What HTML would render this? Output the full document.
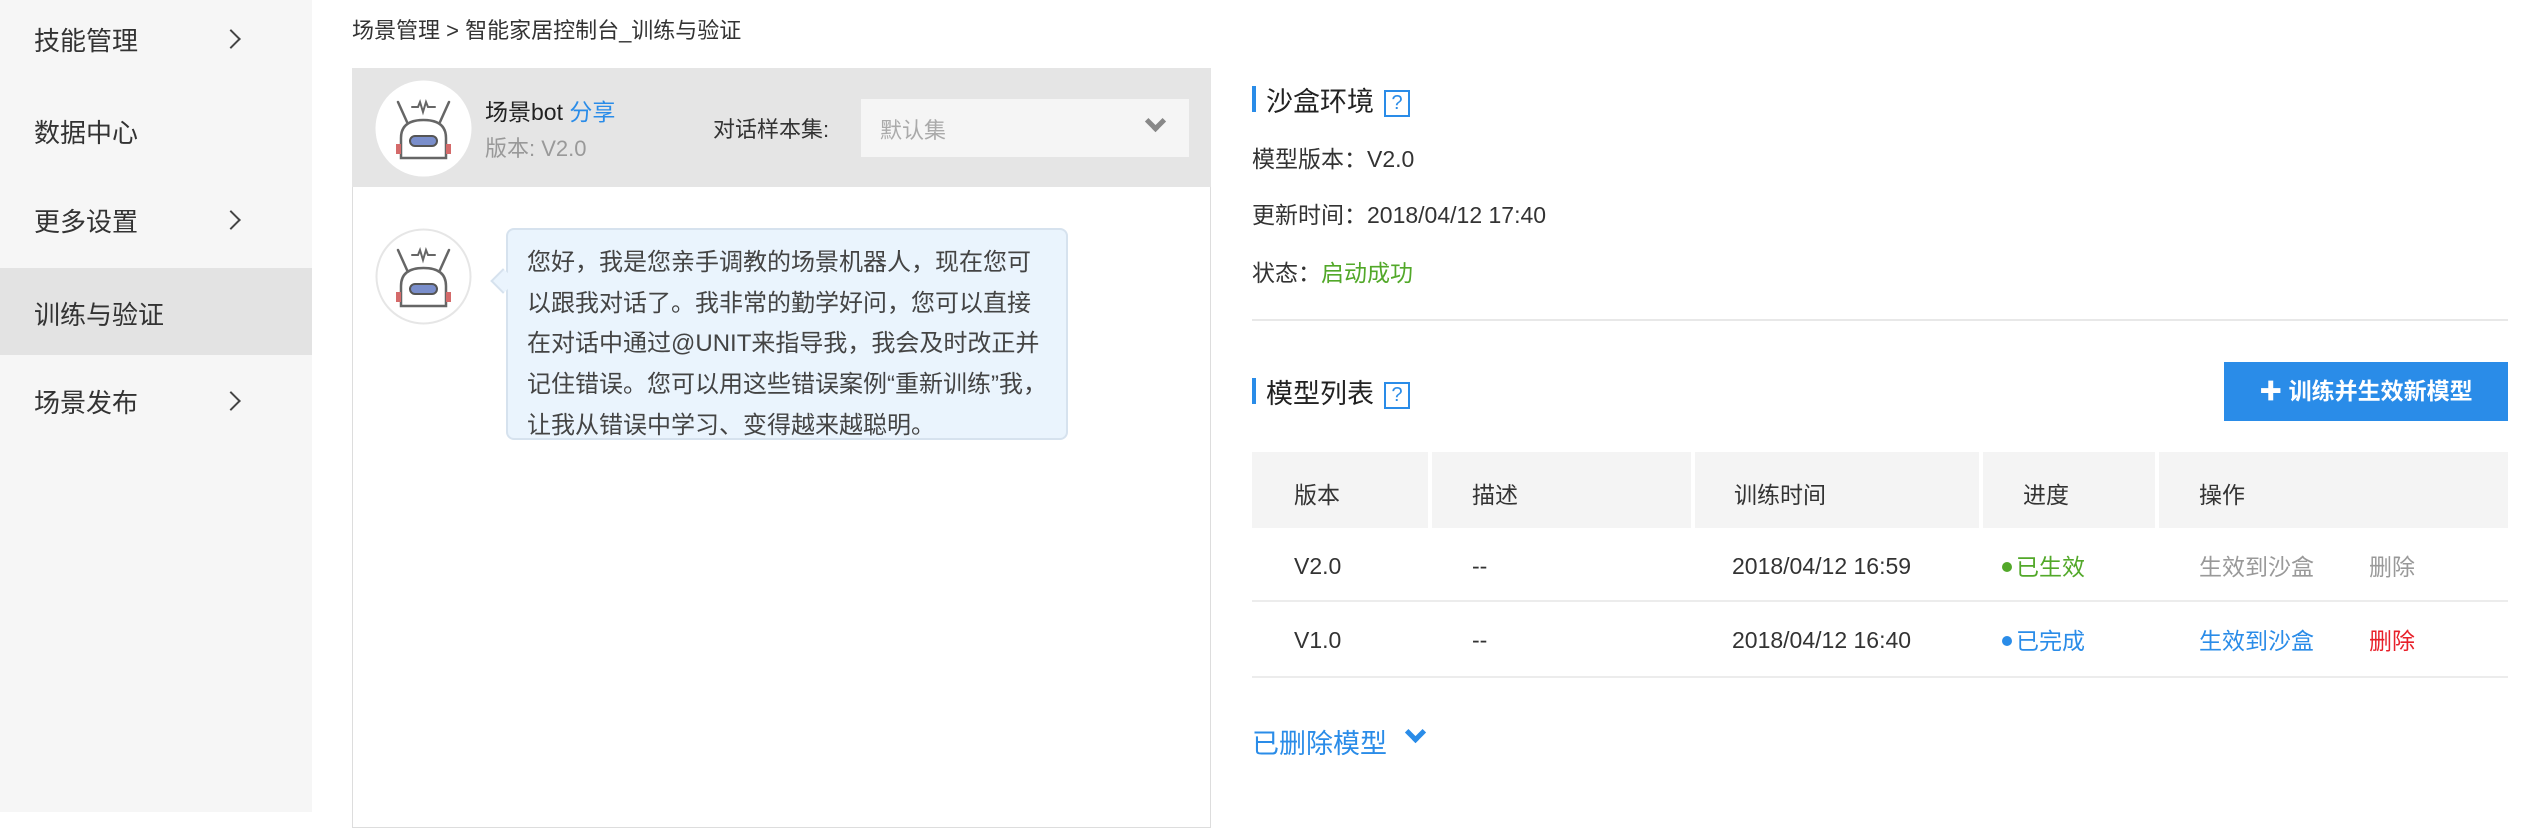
<!DOCTYPE html>
<html><head><meta charset="utf-8"><style>
*{margin:0;padding:0;box-sizing:border-box}
html,body{width:2534px;height:812px}
body{background:#fff;font-family:"Liberation Sans","Noto Sans CJK SC",sans-serif;color:#333;position:relative;overflow:hidden}
.a{position:absolute;white-space:nowrap}
.side{position:absolute;left:0;top:0;width:312px;height:812px;background:#f6f6f6}
.si{position:absolute;left:34px;font-size:26px;color:#333}
.chev{position:absolute;left:224px;width:14px;height:14px;border-right:2px solid #444;border-top:2px solid #444;transform:rotate(45deg)}
.t{font-size:23px;color:#333}
.q{display:inline-block;width:26px;height:27px;border:2px solid #2a8ce8;color:#2a8ce8;font-size:20px;line-height:23px;text-align:center;vertical-align:middle;margin-left:10px}
.bar{position:absolute;left:1252px;width:4px;height:26px;background:#2a8ce8}
.dot{display:inline-block;width:10px;height:10px;border-radius:50%;margin-right:4px;vertical-align:3px}
</style></head><body>
<div class="side">
<div style="position:absolute;left:0;top:268px;width:312px;height:87px;background:#e3e3e3"></div>
<div class="si" style="top:21px">技能管理</div><div class="chev" style="top:32px"></div>
<div class="si" style="top:113px">数据中心</div>
<div class="si" style="top:202px">更多设置</div><div class="chev" style="top:213px"></div>
<div class="si" style="top:295px">训练与验证</div>
<div class="si" style="top:383px">场景发布</div><div class="chev" style="top:394px"></div>
</div>
<div class="a" style="left:352px;top:13px;font-size:22px;color:#333">场景管理 &gt; 智能家居控制台_训练与验证</div>
<div style="position:absolute;left:352px;top:68px;width:859px;height:760px;border:1px solid #ddd"></div>
<div style="position:absolute;left:352px;top:68px;width:859px;height:119px;background:#e5e5e5"></div>
<svg style="position:absolute;left:375px;top:80px" width="97" height="97" viewBox="0 0 97 97">
<circle cx="48.5" cy="48.5" r="48" fill="#fff"/>
<g stroke="#666" stroke-width="2.5" fill="none" stroke-linecap="round">
<path d="M23 22 L32 42 M74 22 L65 42"/>
<path d="M37 27 L43 27 L45 22 L48 32 L51 22 L53 27 L60 27" stroke-width="2"/>
<path d="M26 78 L26 58 Q26 40 48.5 40 Q71 40 71 58 L71 78 Z" fill="#fff"/>
</g>
<rect x="35" y="56" width="27" height="10" rx="5" fill="#7a8ecb" stroke="#555" stroke-width="2"/>
<rect x="21" y="64" width="5" height="10" fill="#d46a6a"/><rect x="71" y="64" width="5" height="10" fill="#d46a6a"/>
</svg>
<div class="a" style="left:485px;top:93px;font-size:23px;color:#222">场景bot <span style="color:#2a8ce8">分享</span></div>
<div class="a" style="left:485px;top:131px;font-size:22px;color:#999">版本: V2.0</div>
<div class="a" style="left:713px;top:112px;font-size:22px;color:#333">对话样本集:</div>
<div style="position:absolute;left:861px;top:99px;width:328px;height:58px;background:#f5f5f5"></div>
<div class="a" style="left:880px;top:113px;font-size:22px;color:#aaa">默认集</div>
<div style="position:absolute;left:1148px;top:114px;width:15px;height:15px;border-right:5px solid #888;border-bottom:5px solid #888;transform:rotate(45deg)"></div>
<svg style="position:absolute;left:375px;top:228px" width="97" height="97" viewBox="0 0 97 97">
<circle cx="48.5" cy="48.5" r="47" fill="#fff" stroke="#e6e6e6" stroke-width="2"/>
<g stroke="#666" stroke-width="2.5" fill="none" stroke-linecap="round">
<path d="M23 22 L32 42 M74 22 L65 42"/>
<path d="M37 27 L43 27 L45 22 L48 32 L51 22 L53 27 L60 27" stroke-width="2"/>
<path d="M26 78 L26 58 Q26 40 48.5 40 Q71 40 71 58 L71 78 Z" fill="#fff"/>
</g>
<rect x="35" y="56" width="27" height="10" rx="5" fill="#7a8ecb" stroke="#555" stroke-width="2"/>
<rect x="21" y="64" width="5" height="10" fill="#d46a6a"/><rect x="71" y="64" width="5" height="10" fill="#d46a6a"/>
</svg>
<div style="position:absolute;left:506px;top:228px;width:562px;height:212px;background:#eaf4fd;border:2px solid #d6e2ee;border-radius:8px"></div>
<div style="position:absolute;left:494px;top:272px;width:18px;height:18px;background:#eaf4fd;border-left:2px solid #d6e2ee;border-bottom:2px solid #d6e2ee;transform:rotate(45deg)"></div>
<div style="position:absolute;left:527px;top:243px;font-size:24px;line-height:40.7px;color:#444;white-space:nowrap">您好，我是您亲手调教的场景机器人，现在您可<br>以跟我对话了。我非常的勤学好问，您可以直接<br>在对话中通过@UNIT来指导我，我会及时改正并<br>记住错误。您可以用这些错误案例“重新训练”我，<br>让我从错误中学习、变得越来越聪明。</div>

<div class="bar" style="top:86px"></div>
<div class="a" style="left:1266px;top:80px;font-size:27px;color:#222">沙盒环境<span class="q">?</span></div>
<div class="a t" style="left:1252px;top:140px">模型版本：V2.0</div>
<div class="a t" style="left:1252px;top:196px">更新时间：2018/04/12 17:40</div>
<div class="a t" style="left:1252px;top:254px">状态：<span style="color:#52a829">启动成功</span></div>
<div style="position:absolute;left:1252px;top:319px;width:1256px;height:2px;background:#e8e8e8"></div>
<div class="bar" style="top:378px"></div>
<div class="a" style="left:1266px;top:372px;font-size:27px;color:#222">模型列表<span class="q">?</span></div>
<div style="position:absolute;left:2224px;top:362px;width:284px;height:59px;background:#2a8ce8;color:#fff;font-size:23px;line-height:59px;text-align:center;font-weight:bold">✚ 训练并生效新模型</div>
<div style="position:absolute;left:1252px;top:452px;width:1256px;height:76px;background:#f4f4f4"></div>
<div style="position:absolute;left:1428px;top:452px;width:4px;height:76px;background:#fff"></div>
<div style="position:absolute;left:1691px;top:452px;width:4px;height:76px;background:#fff"></div>
<div style="position:absolute;left:1979px;top:452px;width:4px;height:76px;background:#fff"></div>
<div style="position:absolute;left:2155px;top:452px;width:4px;height:76px;background:#fff"></div>
<div class="a t" style="left:1294px;top:476px">版本</div>
<div class="a t" style="left:1472px;top:476px">描述</div>
<div class="a t" style="left:1734px;top:476px">训练时间</div>
<div class="a t" style="left:2023px;top:476px">进度</div>
<div class="a t" style="left:2199px;top:476px">操作</div>
<div class="a t" style="left:1294px;top:553px">V2.0</div>
<div class="a t" style="left:1472px;top:553px">--</div>
<div class="a t" style="left:1732px;top:553px">2018/04/12 16:59</div>
<div class="a t" style="left:2002px;top:548px;color:#52a829"><span class="dot" style="background:#52a829"></span>已生效</div>
<div class="a t" style="left:2199px;top:548px;color:#999">生效到沙盒</div>
<div class="a t" style="left:2369px;top:548px;color:#999">删除</div>
<div style="position:absolute;left:1252px;top:600px;width:1256px;height:2px;background:#ececec"></div>
<div class="a t" style="left:1294px;top:627px">V1.0</div>
<div class="a t" style="left:1472px;top:627px">--</div>
<div class="a t" style="left:1732px;top:627px">2018/04/12 16:40</div>
<div class="a t" style="left:2002px;top:622px;color:#2a8ce8"><span class="dot" style="background:#2a8ce8"></span>已完成</div>
<div class="a t" style="left:2199px;top:622px;color:#2a8ce8">生效到沙盒</div>
<div class="a t" style="left:2369px;top:622px;color:#e8202a">删除</div>
<div style="position:absolute;left:1252px;top:676px;width:1256px;height:2px;background:#ececec"></div>
<div class="a" style="left:1252px;top:722px;font-size:27px;color:#2a8ce8">已删除模型</div>
<div style="position:absolute;left:1408px;top:725px;width:15px;height:15px;border-right:5px solid #2a8ce8;border-bottom:5px solid #2a8ce8;transform:rotate(45deg)"></div>
</body></html>
